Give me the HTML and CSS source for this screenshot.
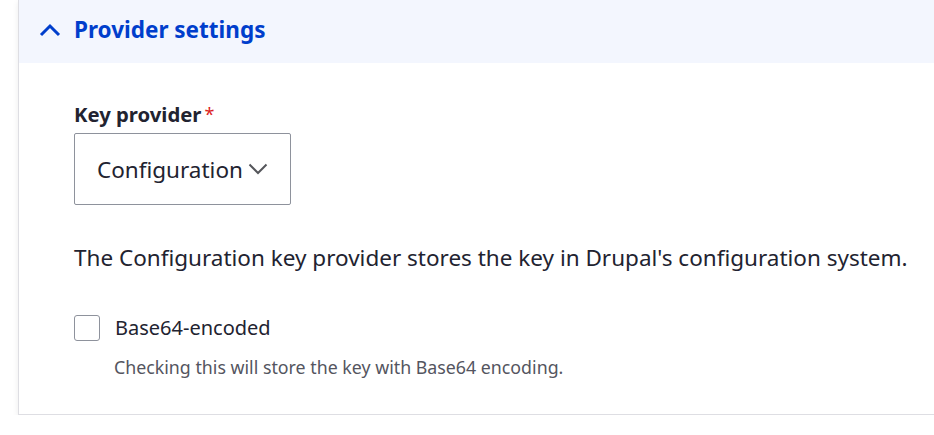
FILE: index.html
```html
<!DOCTYPE html>
<html>
<head>
<meta charset="utf-8">
<link rel="stylesheet" href="styles.css">
</head>
<body>
<div class="page">
  <div class="card">
    <div class="summary">
      <svg class="chev" width="22" height="14" viewBox="0 0 22 14"><path d="M2 12 L11 3 L20 12" fill="none" stroke="#003ecc" stroke-width="3"/></svg>
      <span class="title">Provider settings</span>
    </div>
    <div class="body">
      <div class="label">Key provider<span class="req">*</span></div>
      <div class="select">
        <span>Configuration</span>
        <svg width="20" height="12" viewBox="0 0 20 12"><path d="M1.5 1.5 L10 10 L18.5 1.5" fill="none" stroke="#55565b" stroke-width="2"/></svg>
      </div>
      <p class="desc">The Configuration key provider stores the key in Drupal's configuration system.</p>
      <div class="check">
        <span class="box"></span>
        <span class="clabel">Base64-encoded</span>
      </div>
      <div class="hint">Checking this will store the key with Base64 encoding.</div>
    </div>
  </div>
</div>
</body>
</html>
```
FILE: styles.css
```css
html, body { margin: 0; padding: 0; background: #fff; }
body { font-family: "Noto Sans", "Open Sans", sans-serif; color: #222330; }
.page { padding: 0 0 0 18px; width: 916px; overflow: hidden; }
.card {
  border-left: 1px solid #dedee3;
  border-bottom: 1px solid #dedee3;
  box-shadow: 0 2px 6px rgba(0,0,0,0.08);
  width: 940px;
  background: #fff;
  height: 415px;
  box-sizing: border-box;
}
.summary {
  background: #f3f6fe;
  height: 63px;
  display: flex;
  align-items: center;
  padding-left: 20px;
}
.chev { margin-right: 13px; margin-top: -3px; }
.title { color: #003ecc; font-weight: 700; font-size: 22.5px; line-height: 30px; margin-top: -4px; }
.body { padding: 39px 0 0 55px; }
.label { font-weight: 700; font-size: 20.3px; line-height: 24px; }
.req { color: #dc2323; margin-left: 3px; font-weight: 400; font-size: 18px; vertical-align: top; }
.select {
  margin-top: 7px;
  width: 217px; height: 72px; box-sizing: border-box;
  border: 1px solid #8e929c; border-radius: 2px;
  display: flex; align-items: center; gap: 5px;
  padding-left: 22px;
  font-size: 22.5px;
}
.select span { margin-top: 1px; }
.desc { margin: 36px 0 0; font-size: 22.5px; line-height: 34px; }
.check { display: flex; align-items: center; margin-top: 39px; }
.box { width: 26px; height: 26px; box-sizing: border-box; border: 1px solid #8e929c; border-radius: 3px; }
.clabel { margin-left: 15px; font-size: 20px; }
.hint { margin: 14px 0 0 40px; font-size: 17.8px; color: #545560; }
```
